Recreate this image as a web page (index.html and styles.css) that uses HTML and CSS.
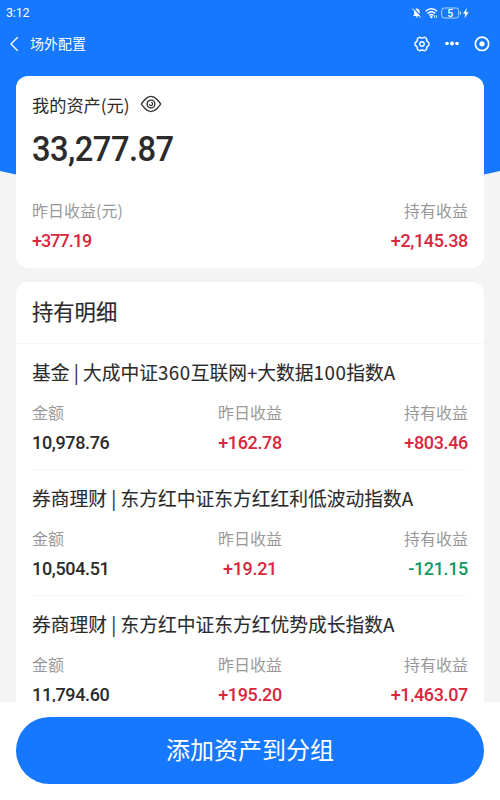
FILE: index.html
```
<!DOCTYPE html>
<html lang="zh-CN">
<head>
<meta charset="utf-8">
<title>场外配置</title>
<link rel="stylesheet" href="styles.css">
</head>
<body>
<div class="screen">
  <header class="hero">
    <div class="status">
      <span class="time">3:12</span>
      <svg class="status-icons" width="60" height="14" viewBox="0 0 60 14" fill="none" stroke="#fff">
        <path d="M3 10h7.800L9.600 8.200V5.600C9.600 3.700 8.400 2.500 6.900 2.500S4.200 3.700 4.200 5.600V8.200z" fill="#fff" stroke="none"/>
        <path d="M5.700 10.500h2.400c0 1.500-2.400 1.500-2.400 0z" fill="#fff" stroke="none"/>
        <path d="M3.400 2l8 8.700" stroke="#1677ff" stroke-width="1.200"/>
        <path d="M2.400 2.600l8.400 9" stroke-width="1"/>
        <path d="M15.600 5.400c3.300-3.600 8.200-3.600 11.500 0M17.500 7.500c2.300-2.400 5.400-2.400 7.700 0M19.300 9.500c1.200-1.200 2.900-1.200 4.100 0" stroke-width="1.400"/>
        <circle cx="21.300" cy="11" r="1.200" fill="#fff" stroke="none"/>
        <path d="M24.400 11.800V9.300M26.400 9.300v2.500" stroke-width=".9"/>
        <rect x="31.700" y="2" width="17" height="10" rx="2.500" stroke="#b9d6ff"/>
        <path d="M50.500 5.500v3" stroke="#b9d6ff" stroke-width="1.200"/>
        <text class="battery" x="40.200" y="10.500" text-anchor="middle">5</text>
        <path d="M56.800 2l-3.800 5.700h2.200l-.6 4.500 4-5.900h-2.400z" fill="#fff" stroke="none"/>
      </svg>
    </div>
    <nav class="nav">
      <svg width="10" height="16" viewBox="0 0 10 16" fill="none" stroke="#fff" stroke-width="1.300"><path d="M8.700 1.300L2 8l6.700 6.700"/></svg>
      <h1 class="nav-title">场外配置</h1>
      <div class="nav-actions">
        <svg width="16" height="16" viewBox="0 0 16 16" fill="none" stroke="#fff" stroke-width="1.400" stroke-linejoin="round"><path d="M5.700 1.200Q8 2.900 10.300 1.200L12.500 2.500Q12.200 5.600 14.900 6.700V9.300Q12.200 10.400 12.500 13.500L10.300 14.800Q8 13.100 5.700 14.800L3.500 13.500Q3.800 10.400 1.100 9.300V6.700Q3.800 5.600 3.500 2.500Z"/><circle cx="8" cy="8" r="2.200"/></svg>
        <svg width="16" height="16" viewBox="0 0 16 16" fill="#fff"><circle cx="3" cy="7.500" r="1.800"/><circle cx="8" cy="7.500" r="2"/><circle cx="13" cy="7.500" r="1.800"/></svg>
        <svg width="16" height="16" viewBox="0 0 16 16"><circle cx="8" cy="7.800" r="6.700" fill="none" stroke="#fff" stroke-width="1.700"/><circle cx="8" cy="7.800" r="2.600" fill="#fff"/></svg>
      </div>
    </nav>
  </header>

  <main class="content">
    <section class="card summary">
      <div class="asset-label">我的资产(元)
        <svg width="22" height="18" viewBox="0 0 22 18" fill="none" stroke="#333" stroke-width="1.400" stroke-linejoin="round"><path d="M1.300 9Q2 7.800 5 4.500Q7.800 1.400 11 1.400T17 4.500Q20 7.800 20.700 9Q20 10.200 17 13.500Q14.200 16.600 11 16.600T5 13.500Q2 10.200 1.300 9Z"/><circle cx="11" cy="9" r="3.900"/><path d="M11.200 7.300A1.700 1.700 0 1 1 9.300 9.200" stroke-width="1.200"/></svg>
      </div>
      <div class="asset-total">33,277.87</div>
      <div class="row labels"><span>昨日收益(元)</span><span>持有收益</span></div>
      <div class="row values"><span class="up first">+377.19</span><span class="up">+2,145.38</span></div>
    </section>

    <section class="card details">
      <h2 class="details-title">持有明细</h2>
      <article class="holding">
        <h3 class="name">基金 | 大成中证<span class="num">360</span>互联网+大数据<span class="num">100</span>指数A</h3>
        <div class="cols labels"><span>金额</span><span>昨日收益</span><span>持有收益</span></div>
        <div class="cols values"><span>10,978.76</span><span class="up">+162.78</span><span class="up">+803.46</span></div>
      </article>
      <article class="holding">
        <h3 class="name">券商理财 | 东方红中证东方红红利低波动指数A</h3>
        <div class="cols labels"><span>金额</span><span>昨日收益</span><span>持有收益</span></div>
        <div class="cols values"><span>10,504.51</span><span class="up">+19.21</span><span class="down">-121.15</span></div>
      </article>
      <article class="holding">
        <h3 class="name">券商理财 | 东方红中证东方红优势成长指数A</h3>
        <div class="cols labels"><span>金额</span><span>昨日收益</span><span>持有收益</span></div>
        <div class="cols values"><span>11,794.60</span><span class="up">+195.20</span><span class="up">+1,463.07</span></div>
      </article>
    </section>
  </main>

  <footer class="footer"><button class="add" type="button">添加资产到分组</button></footer>
</div>
</body>
</html>
```
FILE: styles.css
```
* { box-sizing: border-box; }

body {
  margin: 0;
  font-family: "Noto Sans CJK SC", sans-serif;
  color: #2b2b2b;
}

.screen {
  display: flex;
  flex-direction: column;
  height: 800px;
  overflow: hidden;
  background: #f4f4f4;
}

.hero {
  flex: none;
  height: 200px;
  background: #1677ff;
  color: #fff;
  clip-path: polygon(0 0, 100% 0, 100% 171px, 484px 174.500px, 420px 186px, 80px 186px, 16px 174.500px, 0 171px);
}

.status {
  display: flex;
  justify-content: space-between;
  align-items: center;
  height: 26px;
  padding: 0 30px 0 6px;
}

.time {
  font: 400 12.500px/26px Roboto, sans-serif;
  letter-spacing: -0.200px;
}

.battery {
  font: 500 10.500px Roboto, sans-serif;
  fill: #fff;
  stroke: none;
}

.nav {
  display: flex;
  align-items: center;
  height: 36px;
  padding: 0 10px 0 9px;
}

.nav-title {
  margin: -2px 0 0 11px;
  font-size: 14px;
  line-height: 36px;
  font-weight: 400;
}

.nav-actions {
  display: flex;
  gap: 14px;
  margin-left: auto;
}

.content {
  position: relative;
  z-index: 1;
  flex: none;
  height: 626px;
  margin-top: -124px;
  padding: 0 16px;
}

.card {
  background: #fff;
  border-radius: 12px;
}

.summary {
  height: 192px;
  padding: 14px 16px 0;
}

.asset-label {
  display: flex;
  align-items: center;
  gap: 10px;
  height: 28px;
  font-size: 17.200px;
  line-height: 27px;
}

.asset-total {
  height: 62px;
  font: 500 35px/64px Roboto, sans-serif;
  letter-spacing: -0.600px;
  transform: scaleX(0.935);
  transform-origin: left;
}

.labels {
  color: #999;
  font-size: 16px;
  line-height: 28px;
}

.values {
  font: 500 18px/30px Roboto, sans-serif;
  letter-spacing: -0.350px;
}

.row {
  display: flex;
  justify-content: space-between;
  height: 30px;
}

.summary .labels { margin-top: 16px; }

.first { letter-spacing: -1px; }
.up { color: #d9263c; }
.down { color: #119a62; }

.details {
  height: 420px;
  margin-top: 14px;
  padding-top: 1px;
  border-radius: 12px 12px 0 0;
}

.details-title {
  height: 61px;
  margin: 0;
  padding-left: 16px;
  border-bottom: 1px solid #f7f7f7;
  font-size: 21.300px;
  line-height: 55px;
  font-weight: 400;
  -webkit-text-stroke: 0.200px;
}

.holding {
  height: 126px;
  margin: 0 16px;
  padding-top: 13px;
  border-bottom: 1px solid #f6f6f6;
}

.holding:last-child { border-bottom: 0; }

.name {
  height: 41px;
  margin: 0;
  font-size: 18.750px;
  line-height: 30px;
  font-weight: 400;
  white-space: nowrap;
  -webkit-text-stroke: 0.100px;
}

.num { letter-spacing: 0.500px; }

.cols {
  display: grid;
  grid-template-columns: 1fr 1fr 1fr;
  height: 30px;
}

.cols span:nth-child(2) { text-align: center; }
.cols span:nth-child(3) { text-align: right; }

.footer {
  position: relative;
  z-index: 2;
  flex: 1;
  padding: 15px 16px;
  background: #fff;
}

.add {
  display: block;
  width: 100%;
  height: 67px;
  padding: 0 0 3px;
  border: 0;
  border-radius: 34px;
  background: #1677ff;
  color: #fff;
  font: 400 24px/64px "Noto Sans CJK SC", sans-serif;
}
```
